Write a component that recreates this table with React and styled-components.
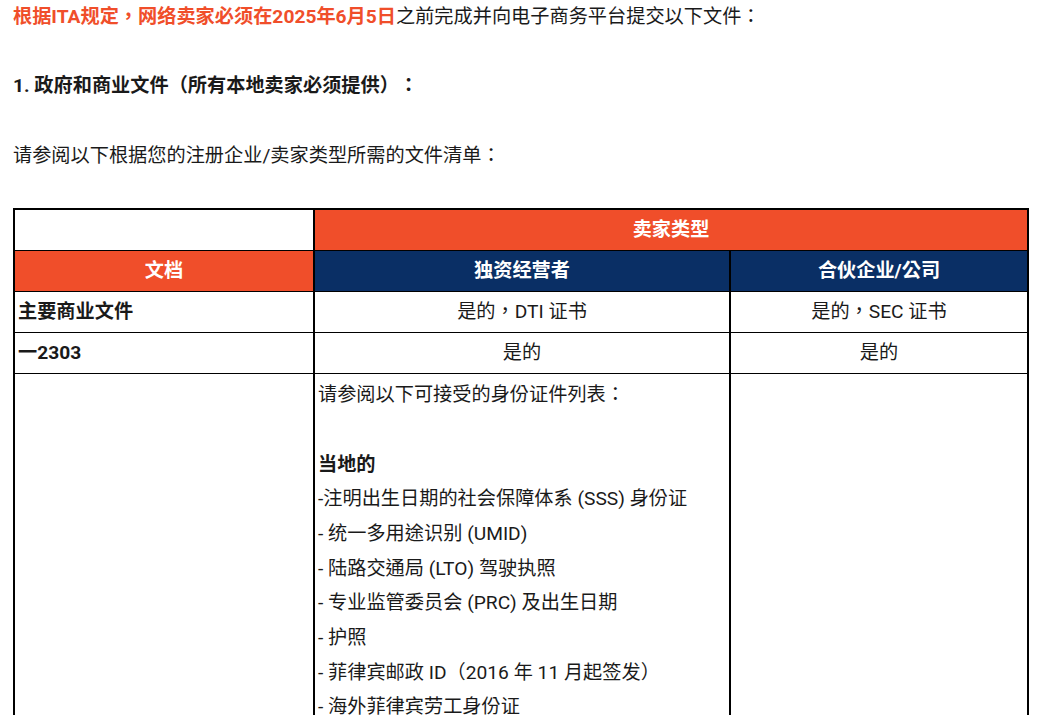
import React from "react";
import styled, { createGlobalStyle } from "styled-components";

const GlobalStyle = createGlobalStyle`
  body {
    margin: 0;
    background: #ffffff;
    font-family: Roboto, "Noto Sans CJK TC", sans-serif;
    color: #1a1a1a;
    text-spacing-trim: space-all;
  }
`;

const Page = styled.div`
  padding: 0 14px 0 13px;
  font-size: 19.2px;
  line-height: 34.7px;
`;

const Para = styled.p`
  margin: 0 0 34.7px 0;
  font-weight: ${(p) => (p.$bold ? 700 : 400)};
`;

const Alert = styled.span`
  color: #f04e2a;
  font-weight: 700;
`;

const Table = styled.table`
  width: 1014px;
  border-collapse: collapse;
  table-layout: fixed;
  border-top: 2px solid #000;
  margin-top: 1px;
`;

const Cell = styled.td`
  border-left: 2px solid #000;
  border-right: 2px solid #000;
  border-top: 1px solid #000;
  border-bottom: 1px solid #000;
  padding: ${(p) => (p.$top ? "4px 3px 0" : "0 3px")};
  height: 40px;
  line-height: 34.7px;
  vertical-align: ${(p) => (p.$top ? "top" : "middle")};
  text-align: ${(p) => (p.$center ? "center" : "left")};
  font-weight: ${(p) => (p.$bold ? 700 : 400)};
  background: ${(p) =>
    p.$tone === "orange" ? "#f04e2a" : p.$tone === "navy" ? "#0a2f65" : "#ffffff"};
  color: ${(p) => (p.$tone ? "#ffffff" : "#1a1a1a")};
`;

const Line = styled.div`
  font-weight: ${(p) => (p.$bold ? 700 : 400)};
  ${(p) => p.$gapAfter && "margin-bottom: 34.7px;"}
`;

const ids = [
  "-注明出生日期的社会保障体系 (SSS) 身份证",
  "- 统一多用途识别 (UMID)",
  "- 陆路交通局 (LTO) 驾驶执照",
  "- 专业监管委员会 (PRC) 及出生日期",
  "- 护照",
  "- 菲律宾邮政 ID（2016 年 11 月起签发）",
  "- 海外菲律宾劳工身份证",
];

export default function App() {
  return (
    <Page>
      <GlobalStyle />
      <Para>
        <Alert>根据ITA规定，网络卖家必须在2025年6月5日</Alert>
        之前完成并向电子商务平台提交以下文件：
      </Para>
      <Para $bold>1. 政府和商业文件（所有本地卖家必须提供）：</Para>
      <Para>请参阅以下根据您的注册企业/卖家类型所需的文件清单：</Para>

      <Table>
        <colgroup>
          <col style={{ width: "300px" }} />
          <col style={{ width: "416px" }} />
          <col style={{ width: "298px" }} />
        </colgroup>
        <tbody>
          <tr>
            <Cell />
            <Cell colSpan={2} $center $bold $tone="orange">
              卖家类型
            </Cell>
          </tr>
          <tr>
            <Cell $center $bold $tone="orange">
              文档
            </Cell>
            <Cell $center $bold $tone="navy">
              独资经营者
            </Cell>
            <Cell $center $bold $tone="navy">
              合伙企业/公司
            </Cell>
          </tr>
          <tr>
            <Cell $bold>主要商业文件</Cell>
            <Cell $center>是的，DTI 证书</Cell>
            <Cell $center>是的，SEC 证书</Cell>
          </tr>
          <tr>
            <Cell $bold>一2303</Cell>
            <Cell $center>是的</Cell>
            <Cell $center>是的</Cell>
          </tr>
          <tr>
            <Cell $top />
            <Cell $top>
              <Line $gapAfter>请参阅以下可接受的身份证件列表：</Line>
              <Line $bold>当地的</Line>
              {ids.map((t) => (
                <Line key={t}>{t}</Line>
              ))}
            </Cell>
            <Cell $top />
          </tr>
        </tbody>
      </Table>
    </Page>
  );
}
